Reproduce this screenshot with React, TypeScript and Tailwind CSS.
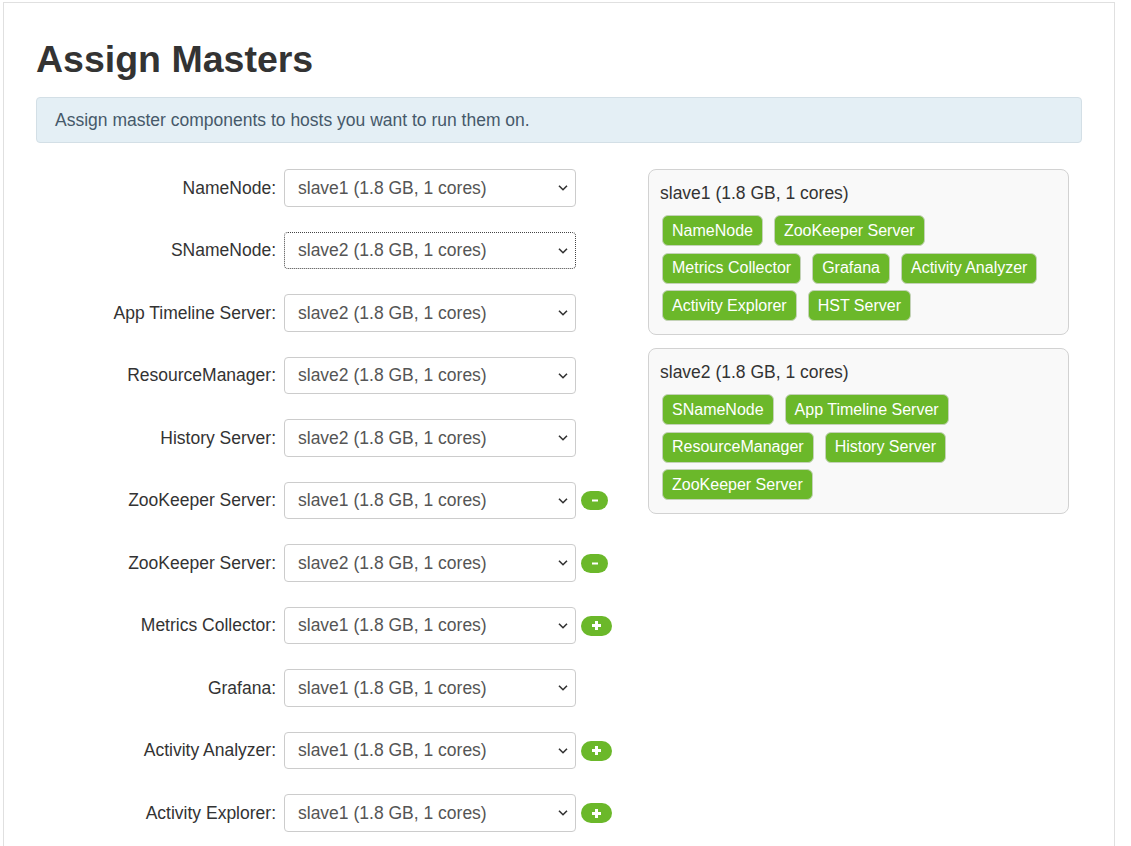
import React from "react";

type Row = { label: string; host: string; btn?: "plus" | "minus"; focused?: boolean };

const rows: Row[] = [
  { label: "NameNode", host: "slave1" },
  { label: "SNameNode", host: "slave2", focused: true },
  { label: "App Timeline Server", host: "slave2" },
  { label: "ResourceManager", host: "slave2" },
  { label: "History Server", host: "slave2" },
  { label: "ZooKeeper Server", host: "slave1", btn: "minus" },
  { label: "ZooKeeper Server", host: "slave2", btn: "minus" },
  { label: "Metrics Collector", host: "slave1", btn: "plus" },
  { label: "Grafana", host: "slave1" },
  { label: "Activity Analyzer", host: "slave1", btn: "plus" },
  { label: "Activity Explorer", host: "slave1", btn: "plus" },
];

const hosts = [
  {
    name: "slave1 (1.8 GB, 1 cores)",
    comps: ["NameNode", "ZooKeeper Server", "Metrics Collector", "Grafana", "Activity Analyzer", "Activity Explorer", "HST Server"],
  },
  {
    name: "slave2 (1.8 GB, 1 cores)",
    comps: ["SNameNode", "App Timeline Server", "ResourceManager", "History Server", "ZooKeeper Server"],
  },
];

function HostSelect({ host, focused }: { host: string; focused?: boolean }) {
  return (
    <div
      className={
        "relative w-[292px] h-[37.5px] rounded-[4px] bg-white flex items-center pl-[13px] text-[17.5px] text-[#555] " +
        (focused ? "border border-dotted border-[#444]" : "border border-[#ccc]")
      }
    >
      <span>{host} (1.8 GB, 1 cores)</span>
      <svg className="absolute right-[7px] top-1/2 -translate-y-1/2" width="10" height="7" viewBox="0 0 10 7">
        <path d="M1 1.2 L5 5.2 L9 1.2" fill="none" stroke="#333" strokeWidth="1.6" />
      </svg>
    </div>
  );
}

function SmallBtn({ kind }: { kind: "plus" | "minus" }) {
  if (kind === "minus") {
    return (
      <div className="ml-[5px] w-[27px] h-[19px] rounded-full bg-[#6bb82a] flex items-center justify-center">
        <svg width="6" height="3" viewBox="0 0 6 3">
          <rect x="0" y="0.5" width="6" height="2" fill="#fff" />
        </svg>
      </div>
    );
  }
  return (
    <div className="ml-[5px] w-[31px] h-[20px] rounded-full bg-[#6bb82a] flex items-center justify-center">
      <svg width="9" height="9" viewBox="0 0 9 9">
        <rect x="3" y="0" width="3" height="9" fill="#fff" />
        <rect x="0" y="3" width="9" height="3" fill="#fff" />
      </svg>
    </div>
  );
}

export default function App() {
  return (
    <div className="bg-white min-h-[846px] pl-[3px] pr-[16px] pt-[2px] font-['Liberation_Sans',Arial,sans-serif] text-[#333]">
      <div className="w-[1112px] min-h-[900px] border border-[#e0e0e0] border-b-0 px-[32px] pt-[36px]">
        <h1 className="text-[37.5px] font-bold leading-[1.1] text-[#333]">Assign Masters</h1>
        <div className="mt-[17px] h-[46px] rounded-[4px] border border-[#d3dfe6] bg-[#e4eff5] flex items-center px-[18px] text-[17.5px] text-[#46596a]">
          Assign master components to hosts you want to run them on.
        </div>

        <div className="flex mt-[26px]">
          <div className="w-[576px] flex flex-col gap-y-[25px]">
            {rows.map((r, i) => (
              <div key={i} className="flex items-center h-[37.5px]">
                <div className="w-[240px] text-right text-[17.5px] text-[#333]">{r.label}:</div>
                <div className="ml-[8px]">
                  <HostSelect host={r.host} focused={r.focused} />
                </div>
                {r.btn && <SmallBtn kind={r.btn} />}
              </div>
            ))}
          </div>

          <div className="ml-[36px] w-[421px] flex flex-col gap-y-[13px]">
            {hosts.map((h) => (
              <div key={h.name} className="rounded-[8px] border border-[#d2d2d2] bg-[#f9f9f9] px-[11px] pt-[11px] pb-[13px]">
                <div className="text-[17.5px] leading-[25px] text-[#333]">{h.name}</div>
                <div className="mt-[9px] ml-[2px] flex flex-wrap gap-x-[11px] gap-y-[6.5px]">
                  {h.comps.map((c) => (
                    <span
                      key={c}
                      className="h-[31px] px-[9px] rounded-[6px] border border-[#c4d2b8] bg-[#6bb82a] text-white text-[16px] flex items-center"
                    >
                      {c}
                    </span>
                  ))}
                </div>
              </div>
            ))}
          </div>
        </div>
      </div>
    </div>
  );
}
